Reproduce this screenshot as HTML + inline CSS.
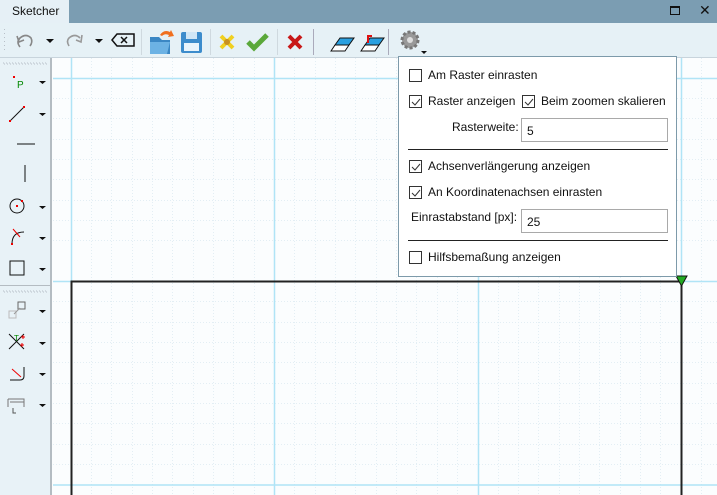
<!DOCTYPE html>
<html><head><meta charset="utf-8"><style>
*{margin:0;padding:0;box-sizing:border-box}
body{width:717px;height:495px;overflow:hidden;background:#fbfdfe;font-family:"Liberation Sans",sans-serif;font-size:12px;color:#111;position:relative}
.abs{position:absolute}
.cb{position:absolute;width:13px;height:13px;border:1px solid #333;background:#fff}
.cb svg{position:absolute;left:1px;top:1px}
.t{position:absolute;white-space:nowrap;font-size:12px}
.inp{position:absolute;border:1px solid #a9a9a9;background:#fff;height:24px;padding:5px 0 0 5px;font-size:12px}
.sep{position:absolute;height:1px;background:#222}
</style></head><body>
<!-- title bar -->
<div class="abs" style="left:0;top:0;width:717px;height:23px;background:#7b9db2"></div>
<div class="abs" style="left:0;top:0;width:69px;height:23px;background:#e6f0f6"></div>
<div class="t" style="left:12px;top:4px;font-size:12px">Sketcher</div>
<div class="abs" style="left:670px;top:6px;width:10px;height:9px;border:1px solid #111;border-top-width:2px"></div>
<div class="t" style="left:699px;top:2px;font-size:14px">✕</div>
<!-- toolbar -->
<div class="abs" style="left:0;top:23px;width:717px;height:35px;background:#e6f1f6;border-bottom:1px solid #c8d4dc"></div>
<svg class="abs" style="left:0;top:25px" width="717" height="34">
<g fill="#b8c0c8"><rect x="4" y="4" width="1" height="1"/><rect x="4" y="8" width="1" height="1"/><rect x="4" y="12" width="1" height="1"/><rect x="4" y="16" width="1" height="1"/><rect x="4" y="20" width="1" height="1"/><rect x="4" y="24" width="1" height="1"/></g>
<path d="M20 22 q-4-5 0-9 q6-5 11 0 q2 4-1 8" stroke="#888" stroke-width="1.6" fill="none"/><path d="M17 11 l2 6 l5-2" stroke="#888" stroke-width="1.6" fill="none"/>
<path d="M46 14 h8 l-4 4z" fill="#111"/>
<path d="M69 21 q-3-5 0-8 q6-5 11 0" stroke="#999" stroke-width="1.6" fill="none"/><path d="M82 10 l-1 7 l-5-2" stroke="#999" stroke-width="1.6" fill="none"/>
<path d="M95 14 h8 l-4 4z" fill="#111"/>
<path d="M112 15 l5-6 h17 v12 h-17z" fill="none" stroke="#111" stroke-width="1.5"/><path d="M121 12 l6 6 M127 12 l-6 6" stroke="#111" stroke-width="1.5"/>
<rect x="141" y="4" width="1" height="26" fill="#cfd9df"/>
<path d="M150 12 h9 l3 3 h8 v14 h-20z" fill="#3b87c4"/><path d="M150 17 h20 l-3 12 h-17z" fill="#6cb2e4"/><path d="M160 10 q4-6 10-3 l1-2 l3 6 l-6 1 l1-2 q-4-2-7 1z" fill="#f07020"/>
<rect x="181" y="7" width="21" height="21" rx="2" fill="#3c8ccc"/><rect x="186" y="7" width="11" height="7" fill="#cfe6f6"/><rect x="184" y="18" width="15" height="8" fill="#e8f4fc"/>
<rect x="210" y="4" width="1" height="26" fill="#cfd9df"/>
<path d="M221 11 l12 12 M233 11 l-12 12" stroke="#f0d020" stroke-width="4"/><circle cx="227" cy="17" r="3" fill="#c89020"/>
<path d="M248 17 l6 6 l13-13" stroke="#5aa83a" stroke-width="5" fill="none"/>
<rect x="277" y="4" width="1" height="26" fill="#cfd9df"/>
<path d="M289 11 l12 12 M301 11 l-12 12" stroke="#c81818" stroke-width="4"/>
<rect x="313" y="4" width="1" height="26" fill="#aab"/>
<path d="M331 26 l4-6 h14 l-4 6z" fill="#fff" stroke="#111"/><path d="M335 20 l5-7 h14 l-5 7z" fill="#2aa0e0" stroke="#111"/>
<path d="M361 26 l4-6 h14 l-4 6z" fill="#fff" stroke="#111"/><path d="M365 20 l5-7 h14 l-5 7z" fill="#2aa0e0" stroke="#111"/><path d="M368 18 v-7 h4" stroke="#e01010" stroke-width="2" fill="none"/>
<rect x="388" y="4" width="1" height="26" fill="#aab"/>
<circle cx="410" cy="15" r="8" fill="#999" stroke="#777" stroke-dasharray="3 2" stroke-width="3"/><circle cx="410" cy="15" r="3" fill="#ddd"/>
<path d="M421 26 h6 l-3 3z" fill="#111"/>
</svg>
<!-- left panel -->
<div class="abs" style="left:0;top:58px;width:52px;height:437px;background:#e8f2f7;border-right:2px solid #b4bcc2"></div>
<div class="abs" style="left:0;top:285px;width:52px;height:1px;background:#b4bcc2"></div>
<svg class="abs" style="left:0;top:58px" width="52" height="437">
<rect x="3" y="5" width="44" height="1" style="fill:none;stroke:#b8c0c8;stroke-dasharray:1 2"/><rect x="3" y="233" width="44" height="1" style="fill:none;stroke:#b8c0c8;stroke-dasharray:1 2"/>
<rect x="13" y="18" width="2" height="2" fill="#e00"/><text x="17" y="30" font-size="10" fill="#080" font-family="Liberation Sans">P</text>
<path d="M39 23 h7 l-3.5 3z M39 55 h7 l-3.5 3z M39 148 h7 l-3.5 3z M39 179 h7 l-3.5 3z M39 210 h7 l-3.5 3z M39 252 h7 l-3.5 3z M39 284 h7 l-3.5 3z M39 315 h7 l-3.5 3z M39 346 h7 l-3.5 3z" fill="#111"/>
<path d="M10 63 l14-14" stroke="#111"/><rect x="9" y="62" width="2" height="2" fill="#e00"/><rect x="23" y="48" width="2" height="2" fill="#e00"/>
<path d="M17 86 h18" stroke="#111"/><path d="M25 107 v17" stroke="#111"/>
<circle cx="17" cy="148" r="7" fill="none" stroke="#111"/><rect x="16" y="147" width="2" height="2" fill="#e00"/><rect x="21" y="142" width="2" height="2" fill="#e00"/>
<path d="M12 186 q0-12 12-12" fill="none" stroke="#111"/><path d="M13 171 l7 8" stroke="#e00"/><rect x="11" y="185" width="2" height="2" fill="#e00"/>
<rect x="10" y="203" width="14" height="14" fill="none" stroke="#111"/>
<rect x="9" y="253" width="7" height="7" fill="none" stroke="#bbb"/><rect x="18" y="244" width="7" height="7" fill="none" stroke="#666"/><path d="M14 256 l6-6" stroke="#999"/>
<path d="M9 276 l15 15 M9 291 l15-15" stroke="#111"/><text x="14" y="283" font-size="8" fill="#080">T</text><path d="M21 279 l4 0 M23 277 v4 M20 287 h4 M22 285 v4" stroke="#e00"/>
<path d="M10 322 h10 q4 0 4-4 v-9" fill="none" stroke="#111"/><path d="M12 311 l9 8" stroke="#e00"/>
<path d="M8 341 h16 v8 M8 341 v8 M10 344 h14" fill="none" stroke="#777"/><path d="M13 350 v5 h3" fill="none" stroke="#555"/>
</svg>
<!-- canvas grid -->
<svg class="abs" style="left:53px;top:58px" width="664" height="437">
<g stroke="#e3eef4" stroke-width="1" stroke-dasharray="1 2">
<path d="M38.5 0V437M58.5 0V437M79.5 0V437M99.5 0V437M119.5 0V437M140.5 0V437M160.5 0V437M180.5 0V437M201.5 0V437M241.5 0V437M262.5 0V437M282.5 0V437M302.5 0V437M323.5 0V437M343.5 0V437M363.5 0V437M384.5 0V437M404.5 0V437M445.5 0V437M465.5 0V437M485.5 0V437M506.5 0V437M526.5 0V437M546.5 0V437M567.5 0V437M587.5 0V437M607.5 0V437M648.5 0V437"/>
<path d="M0 40.5H664M0 60.5H664M0 81.5H664M0 101.5H664M0 121.5H664M0 142.5H664M0 162.5H664M0 182.5H664M0 243.5H664M0 264.5H664M0 284.5H664M0 304.5H664M0 325.5H664M0 345.5H664M0 365.5H664M0 386.5H664M0 406.5H664"/>
</g>
<g stroke="#b0e4f6" stroke-width="1.5">
<path d="M18.5 0V437M221.5 0V437M425.5 0V437M628.5 0V437M0 20.5H664M0 223.5H664M0 427H664"/>
</g>
<path d="M18.5 437V223.5H628.5V437" fill="none" stroke="#222" stroke-width="2"/>
<path d="M623 218h11l-5.5 10z" fill="#2a2" stroke="#111"/>
</svg>
<!-- popup -->
<div class="abs" style="left:398px;top:56px;width:279px;height:221px;background:#fff;border:1px solid #7d9aaa"></div>
<div class="cb" style="left:409px;top:69px"></div><div class="t" style="left:428px;top:68px">Am Raster einrasten</div>
<div class="cb" style="left:409px;top:95px"><svg width="10" height="10"><path d="M1 5 l3 3 l5-6" stroke="#333" fill="none"/></svg></div><div class="t" style="left:428px;top:94px">Raster anzeigen</div>
<div class="cb" style="left:522px;top:95px"><svg width="10" height="10"><path d="M1 5 l3 3 l5-6" stroke="#333" fill="none"/></svg></div><div class="t" style="left:541px;top:94px">Beim zoomen skalieren</div>
<div class="t" style="left:452px;top:120px">Rasterweite:</div><div class="inp" style="left:521px;top:118px;width:147px">5</div>
<div class="sep" style="left:408px;top:149px;width:260px"></div>
<div class="cb" style="left:409px;top:160px"><svg width="10" height="10"><path d="M1 5 l3 3 l5-6" stroke="#333" fill="none"/></svg></div><div class="t" style="left:428px;top:159px">Achsenverlängerung anzeigen</div>
<div class="cb" style="left:409px;top:186px"><svg width="10" height="10"><path d="M1 5 l3 3 l5-6" stroke="#333" fill="none"/></svg></div><div class="t" style="left:428px;top:185px">An Koordinatenachsen einrasten</div>
<div class="t" style="left:411px;top:210px">Einrastabstand [px]:</div><div class="inp" style="left:521px;top:209px;width:147px">25</div>
<div class="sep" style="left:408px;top:240px;width:260px"></div>
<div class="cb" style="left:409px;top:251px"></div><div class="t" style="left:428px;top:250px">Hilfsbemaßung anzeigen</div>
</body></html>
